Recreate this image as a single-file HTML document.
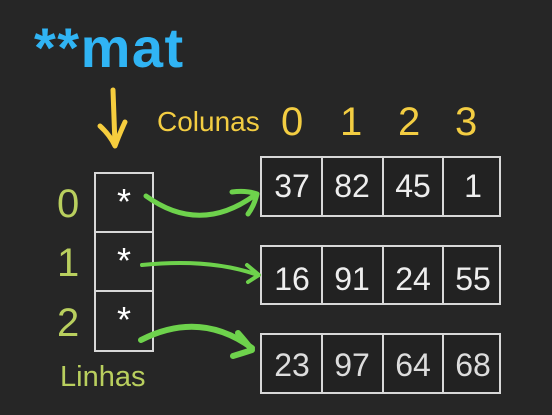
<!DOCTYPE html>
<html><head><style>
body{margin:0;width:552px;height:415px;background:#262626;overflow:hidden;position:relative;font-family:"Liberation Sans","DejaVu Sans",sans-serif}
.t{position:absolute;white-space:nowrap;line-height:1}
.box{position:absolute;border:2px solid #d8d8d8;box-sizing:border-box;background:#222}
.cell{position:absolute;top:0;bottom:0;width:60px;border-left:2px solid #d8d8d8;box-sizing:border-box;color:#eee;font-size:32px;text-align:center;line-height:56px}
.cell:first-child{border-left:none}
.p{position:absolute;left:94px;width:60px;height:61px;border:2px solid #d8d8d8;box-sizing:border-box;color:#fff;font-size:36px;text-align:center;line-height:56px}
</style></head><body>
<div class="t" style="left:34px;top:20px;font-size:56px;font-weight:bold;color:#30b4f4;letter-spacing:1.5px">**mat</div>
<div class="t" style="left:157px;top:108px;font-size:28px;color:#f3cd42">Colunas</div>
<div class="t" style="left:281px;top:102px;font-size:40px;color:#f3cd42">0</div>
<div class="t" style="left:340px;top:102px;font-size:40px;color:#f3cd42">1</div>
<div class="t" style="left:398px;top:102px;font-size:40px;color:#f3cd42">2</div>
<div class="t" style="left:455px;top:102px;font-size:40px;color:#f3cd42">3</div>
<div class="t" style="left:57px;top:184px;font-size:40px;color:#b9cf5e">0</div>
<div class="t" style="left:57px;top:243px;font-size:40px;color:#b9cf5e">1</div>
<div class="t" style="left:57px;top:303px;font-size:40px;color:#b9cf5e">2</div>
<div class="t" style="left:60px;top:363px;font-size:29px;color:#b9cf5e">Linhas</div>
<div class="p" style="top:172px">*</div>
<div class="p" style="top:231px">*</div>
<div class="p" style="top:290px;height:62px">*</div>
<div class="box" style="left:260px;top:156px;width:241px;height:61px"><div class="cell" style="left:0">37</div><div class="cell" style="left:59px">82</div><div class="cell" style="left:120px">45</div><div class="cell" style="left:180px">1</div></div>
<div class="box" style="left:260px;top:245px;width:241px;height:60px"><div class="cell" style="left:0;line-height:64px">16</div><div class="cell" style="left:59px;line-height:64px">91</div><div class="cell" style="left:120px;line-height:64px">24</div><div class="cell" style="left:180px;line-height:64px">55</div></div>
<div class="box" style="left:260px;top:333px;width:241px;height:61px"><div class="cell" style="left:0;line-height:60px;color:#ddd">23</div><div class="cell" style="left:59px;line-height:60px;color:#ddd">97</div><div class="cell" style="left:120px;line-height:60px;color:#ddd">64</div><div class="cell" style="left:180px;line-height:60px;color:#ddd">68</div></div>
<svg width="552" height="415" style="position:absolute;left:0;top:0" fill="none" stroke-linecap="round" stroke-linejoin="round">
<path d="M113 90 Q114 115 115 145" stroke="#f6cd3e" stroke-width="5"/>
<path d="M100 126 Q110 135 115 146 Q119 135 125 122" stroke="#f6cd3e" stroke-width="5"/>
<path d="M146 196 Q200 235 255 195" stroke="#6ed24c" stroke-width="5"/>
<path d="M232 192 Q246 190 257 194 Q254 206 248 214" stroke="#6ed24c" stroke-width="5"/>
<path d="M142 265 Q210 258 258 275" stroke="#6ed24c" stroke-width="4"/>
<path d="M247 265 L259 275 L248 282" stroke="#6ed24c" stroke-width="4"/>
<path d="M141 340 Q200 310 252 348" stroke="#6ed24c" stroke-width="6"/>
<path d="M238 333 Q246 342 252 350 Q243 353 233 356" stroke="#6ed24c" stroke-width="6"/>
</svg>
</body></html>
